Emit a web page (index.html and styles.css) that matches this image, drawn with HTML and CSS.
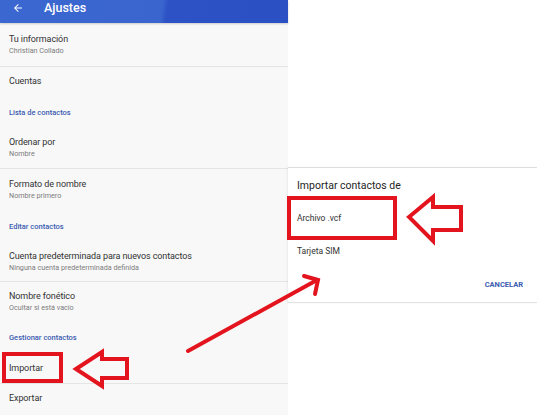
FILE: index.html
```html
<!DOCTYPE html>
<html lang="es">
<head>
    <meta charset="UTF-8">
    <meta name="viewport" content="width=device-width, initial-scale=1.0">
    <title>Ajustes - Importar contactos</title>
    <link rel="stylesheet" href="styles.css">
</head>
<body>

<div class="screen">
    <section class="settings">
        <header class="appbar">
            <svg class="back" viewBox="0 0 24 24" width="12" height="12" aria-hidden="true">
                <path d="M20 11H7.83l5.59-5.59L12 4l-8 8 8 8 1.41-1.41L7.83 13H20v-2z" fill="#fff"/>
            </svg>
            <h1>Ajustes</h1>
        </header>

        <ul class="prefs">
            <li class="pref first">
                <span class="title">Tu información</span>
                <span class="summary">Christian Collado</span>
            </li>
            <li class="pref single">
                <span class="title">Cuentas</span>
            </li>
            <li class="category">Lista de contactos</li>
            <li class="pref">
                <span class="title">Ordenar por</span>
                <span class="summary">Nombre</span>
            </li>
            <li class="pref tall">
                <span class="title">Formato de nombre</span>
                <span class="summary">Nombre primero</span>
            </li>
            <li class="category">Editar contactos</li>
            <li class="pref short">
                <span class="title">Cuenta predeterminada para nuevos contactos</span>
                <span class="summary">Ninguna cuenta predeterminada definida</span>
            </li>
            <li class="pref">
                <span class="title">Nombre fonético</span>
                <span class="summary">Ocultar si está vacío</span>
            </li>
            <li class="category">Gestionar contactos</li>
            <li class="pref single">
                <span class="title">Importar</span>
            </li>
            <li class="pref single">
                <span class="title">Exportar</span>
            </li>
        </ul>
    </section>

    <aside class="import-area">
        <div class="dialog" role="dialog" aria-label="Importar contactos de">
            <h2>Importar contactos de</h2>
            <ul class="sources">
                <li>Archivo .vcf</li>
                <li>Tarjeta SIM</li>
            </ul>
            <div class="actions">
                <button type="button">CANCELAR</button>
            </div>
        </div>
    </aside>

    <!-- red hand-drawn marks on top of the screens -->
    <svg class="marks" viewBox="0 0 538 415" width="538" height="415" aria-hidden="true">
        <g fill="none" stroke="#e3141e" stroke-width="4" stroke-linejoin="miter">
            <rect x="4" y="354" width="57" height="27"/>
            <polygon points="76,369 102,352 102,359 127,359 127,378 102,378 102,386"/>
            <rect x="289" y="198" width="106" height="40"/>
            <polygon points="409,217 433,197 433,207 461,207 461,230 433,230 433,241"/>
        </g>
        <g fill="none" stroke="#e3141e" stroke-width="4" stroke-linecap="round">
            <line x1="188" y1="351" x2="317" y2="280"/>
            <polyline points="304,276 318,280 315,294"/>
        </g>
    </svg>
</div>

</body>
</html>
```

FILE: styles.css
```css
* {
    margin: 0;
    padding: 0;
    box-sizing: border-box;
}

body {
    font-family: Roboto, "Liberation Sans", sans-serif;
    background-color: #fff;
    width: 538px;
    height: 415px;
    overflow: hidden;
}

.screen {
    position: relative;
    display: flex;
    width: 538px;
    height: 415px;
}

/* left: settings screen */
.settings {
    width: 288px;
    background-color: #f8f8f8;
    display: flex;
    flex-direction: column;
}

.appbar {
    height: 23px;
    display: flex;
    align-items: flex-start;
    gap: 20px;
    padding: 1px 0 0 12px;
    background: linear-gradient(98deg, #3b67d1 0, #3a65cf 56%, #2c52c5 58%, #2a50c3 100%);
    box-shadow: 0 1px 2px rgba(0, 0, 0, 0.18);
    position: relative;
    z-index: 1;
}

.appbar .back {
    margin-top: 1px;
}

.appbar h1 {
    font-size: 12.5px;
    font-weight: 500;
    line-height: 13px;
    color: #fff;
}

.prefs {
    list-style: none;
}

.pref {
    height: 40px;
    padding: 0 9px;
    display: flex;
    flex-direction: column;
    justify-content: center;
}

.pref + .pref {
    border-top: 1px solid #e5e5e5;
}

.pref.first {
    height: 43px;
}

.pref.tall {
    height: 42px;
}

.pref.short {
    height: 39px;
}

.pref.single {
    height: 30px;
}

.pref .title {
    font-size: 9px;
    letter-spacing: -0.1px;
    line-height: 11px;
    color: #333;
}

.pref .summary {
    font-size: 7.2px;
    line-height: 11px;
    color: #7c7c7c;
}

.category {
    height: 32px;
    padding: 0 9px;
    display: flex;
    align-items: center;
    font-size: 7.5px;
    font-weight: 500;
    color: #3a5bb0;
}

/* right: import dialog */
.import-area {
    flex: 1;
    padding: 167px 1px 0 0;
}

.dialog {
    height: 136px;
    background-color: #fff;
    border-top: 1px solid #dedede;
    border-bottom: 1px solid #e2e2e2;
    box-shadow: -1px 0 2px rgba(0, 0, 0, 0.06);
    display: flex;
    flex-direction: column;
    padding: 11px 9px 0;
}

.dialog h2 {
    font-size: 10.5px;
    font-weight: 400;
    line-height: 14px;
    color: #252525;
}

.sources {
    list-style: none;
    margin-top: 8px;
}

.sources li {
    height: 33px;
    display: flex;
    align-items: center;
    font-size: 8.5px;
    color: #333;
}

.actions {
    display: flex;
    justify-content: flex-end;
    margin-top: 13px;
    padding-right: 5px;
}

.actions button {
    font-family: inherit;
    font-size: 7.5px;
    font-weight: 700;
    color: #3a5bb0;
    background: none;
    border: none;
}

.marks {
    position: absolute;
    top: 0;
    left: 0;
    pointer-events: none;
}
```
